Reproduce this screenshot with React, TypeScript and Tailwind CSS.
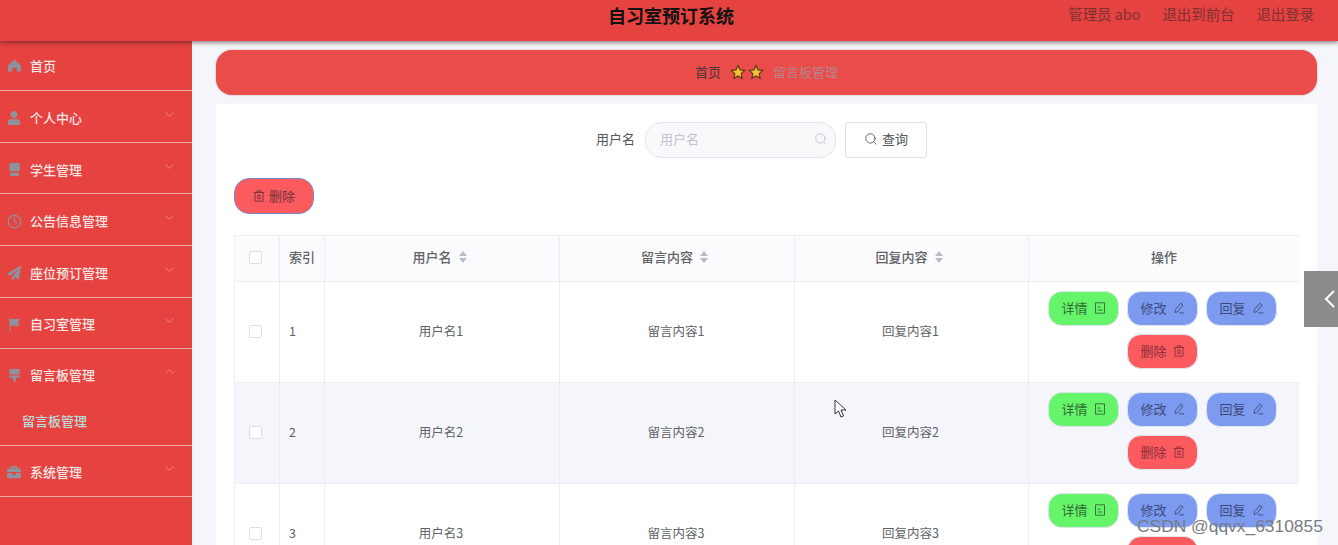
import React from 'react';
import { ChevronDown, ChevronUp, Clock, Search } from 'lucide-react';
import { FaBriefcase, FaPaperPlane, FaUser } from 'react-icons/fa';

const font = 'font-["Noto_Sans_CJK_SC","Liberation_Sans",sans-serif]';

const HomeIcon = () => (
  <svg viewBox="0 0 16 16" className="h-[15px] w-[15px] fill-[#8d939c]">
    <path d="M8 1.5 1 8v6.5h4.6v-4h4.8v4H15V8z" />
  </svg>
);
const ShopIcon = () => (
  <svg viewBox="0 0 16 16" className="h-[15px] w-[15px] fill-[#8d939c]">
    <path d="M2.5 1h11v8.5q-1.4 1.2-2.8 0-1.4 1.2-2.7 0-1.3 1.2-2.7 0-1.4 1.2-2.8 0zM3.5 11.5h9V15h-9z" />
  </svg>
);
const FlagIcon = () => (
  <svg viewBox="0 0 16 16" className="h-[15px] w-[15px] fill-[#8d939c]">
    <path d="M2.5 1h1.2v14H2.5zM3.7 2H14l-2.6 3.6L14 9.2H3.7z" />
  </svg>
);
const BrushIcon = () => (
  <svg viewBox="0 0 16 16" className="h-[15px] w-[15px] fill-[#8d939c]">
    <path d="M2.5 1h11v6h-11zM2.5 8h11v2.5H9.5V13L8 15.5 6.5 13v-2.5h-4z" />
  </svg>
);

// element-ui style outline icons for the table buttons
const DocIcon = () => (
  <svg viewBox="0 0 12 12" className="h-[12px] w-[12px] fill-none stroke-current stroke-[0.9]">
    <path d="M1.5.8h9v10.4h-9zM3.5 5h3M3.5 8h5" />
  </svg>
);
const PenIcon = () => (
  <svg viewBox="0 0 12 12" className="h-[12px] w-[12px] fill-none stroke-current stroke-[0.9]">
    <path d="M7.8 1.2 10 3 4.8 9.6l-2.6.9.1-2.8zM6.3 10.9h5" />
  </svg>
);
const BinIcon = () => (
  <svg viewBox="0 0 12 12" className="h-[12px] w-[12px] fill-none stroke-current stroke-[0.9]">
    <path d="M.8 2.5h10.4M4 2.5V.9h4v1.6M2 2.5v8.7h8V2.5M4.8 5v3.6h2.4V5z" />
  </svg>
);

const menu = [
  { label: '首页', icon: <HomeIcon />, h: 'h-[49px]', arrow: false, pt: '' },
  { label: '个人中心', icon: <FaUser className="h-[14px] w-[14px] text-[#8d939c]" />, h: 'h-[51px]', arrow: true, pt: 'pt-[3px]' },
  { label: '学生管理', icon: <ShopIcon />, h: 'h-[50px]', arrow: true, pt: 'pt-[3px]' },
  { label: '公告信息管理', icon: <Clock className="h-[15px] w-[15px] text-[#8d939c]" />, h: 'h-[51px]', arrow: true, pt: 'pt-[3px]' },
  { label: '座位预订管理', icon: <FaPaperPlane className="h-[14px] w-[14px] text-[#8d939c]" />, h: 'h-[51px]', arrow: true, pt: 'pt-[3px]' },
  { label: '自习室管理', icon: <FlagIcon />, h: 'h-[50px]', arrow: true, pt: 'pt-[2px]' },
];

const Star = () => (
  <svg viewBox="0 0 20 20" className="h-[16px] w-[16px] fill-[#f7c22f] stroke-[#5b3a1a] stroke-[1.5]">
    <path d="m10 2 2.5 5.3 5.7.7-4.2 4 1.1 5.8L10 15l-5.1 2.8L6 12 1.8 8l5.7-.7z" />
  </svg>
);

const MenuRow: React.FC<{ label: string; icon: React.ReactNode; h: string; arrow: boolean; pt: string; open?: boolean }> = ({ label, icon, h, arrow, pt, open }) => (
  <div className={`flex items-center pl-[7px] pr-[15px] ${h} ${pt}`}>
    <span className="flex w-[23px] shrink-0 items-center">{icon}</span>
    <span className="text-[13px] font-medium text-[#f6e7e7]">{label}</span>
    {arrow && (
      <span className="ml-auto -mt-[7px] text-[#ee8a88]">
        {open ? <ChevronUp size={15} strokeWidth={1.5} /> : <ChevronDown size={15} strokeWidth={1.5} />}
      </span>
    )}
  </div>
);

const Sidebar = () => (
  <aside className="w-[192px] shrink-0 bg-[#e64240]">
    {menu.map((m) => (
      <div key={m.label} className="border-b border-[#eda9a7]">
        <MenuRow {...m} />
      </div>
    ))}
    <div className="border-b border-[#eda9a7]">
      <MenuRow label="留言板管理" icon={<BrushIcon />} h="h-[51px]" pt="pt-[1px]" arrow open />
      <div className="flex h-[45px] items-center pb-[3px] pl-[22px] text-[13px] font-medium text-[#b9dfdc]">留言板管理</div>
    </div>
    <div className="border-b border-[#eda9a7]">
      <MenuRow label="系统管理" icon={<FaBriefcase className="h-[14px] w-[14px] text-[#8d939c]" />} h="h-[50px]" pt="pt-[2px]" arrow />
    </div>
  </aside>
);

const Checkbox = () => <span className="block h-[13px] w-[13px] rounded-[2px] border border-[#dcdfe6] bg-white" />;

const Sort = () => (
  <span className="ml-[7px] flex flex-col gap-[2px]">
    <span className="h-0 w-0 border-x-[4.5px] border-b-[5px] border-x-transparent border-b-[#b8bcc4]" />
    <span className="h-0 w-0 border-x-[4.5px] border-t-[5px] border-x-transparent border-t-[#b8bcc4]" />
  </span>
);

const ActionBtn: React.FC<{ label: string; color: string; icon: React.ReactNode }> = ({ label, color, icon }) => (
  <button className={`flex h-[35px] w-[71px] items-center justify-center gap-[6px] rounded-[14px] border border-[#dfe3ea] pb-[2px] text-[13px] ${color}`}>
    {label}
    {icon}
  </button>
);

const headCell = 'flex h-[46px] items-center justify-center border-r border-b border-[#ebeef5] bg-[#fbfbfd] pb-[3px] text-[13px] font-medium text-[#606266]';
const bodyCell = 'flex items-center justify-center border-r border-b border-[#ebeef5] pb-[1px] text-[12.5px] text-[#606266]';

const Row: React.FC<{ n: number; alt: boolean }> = ({ n, alt }) => {
  const bg = alt ? 'bg-[#f5f6fb]' : 'bg-white';
  return (
    <div className="flex h-[101px] shrink-0">
      <div className={`${bodyCell} ${bg} w-[46px] border-l pr-[3px]`}><Checkbox /></div>
      <div className={`${bodyCell} ${bg} w-[45px] justify-start pl-[9px]`}>{n}</div>
      <div className={`${bodyCell} ${bg} w-[235px] pr-[2px]`}>用户名{n}</div>
      <div className={`${bodyCell} ${bg} w-[235px] pr-[2px]`}>留言内容{n}</div>
      <div className={`${bodyCell} ${bg} w-[234px] pr-[2px]`}>回复内容{n}</div>
      <div className={`border-b border-[#ebeef5] ${bg} flex w-[270px] flex-wrap content-start justify-center gap-x-[8px] gap-y-[8px] pt-[9px] pr-[3px]`}>
        <ActionBtn label="详情" color="bg-[#66f56a] text-[#2f6b35]" icon={<DocIcon />} />
        <ActionBtn label="修改" color="bg-[#7b9af0] text-[#3c4a78]" icon={<PenIcon />} />
        <ActionBtn label="回复" color="bg-[#7b9af0] text-[#3c4a78]" icon={<PenIcon />} />
        <ActionBtn label="删除" color="bg-[#fb5a5f] text-[#8c2f3a]" icon={<BinIcon />} />
      </div>
    </div>
  );
};

export default function App() {
  return (
    <div className={`relative flex h-[545px] w-[1338px] flex-col overflow-hidden bg-[#f5f6fb] ${font}`}>
      <header className="relative z-10 flex h-[41px] shrink-0 items-start bg-[#e64240] shadow-[0_2px_4px_rgba(60,30,30,0.5)]">
        <div className="flex-1 pt-[2px] pl-[608px] text-[18px] leading-[26px] font-bold text-[#111]">自习室预订系统</div>
        <div className="flex gap-[22px] pt-[4px] pr-[24px] text-[14.4px] leading-[20px] text-[#7d3033]">
          <span>管理员 abo</span>
          <span>退出到前台</span>
          <span>退出登录</span>
        </div>
      </header>

      <div className="flex min-h-0 flex-1">
        <Sidebar />
        <main className="min-w-0 flex-1 pt-[9px] pr-[21px] pl-[24px]">
          <div className="flex h-[45px] items-center justify-center gap-[9px] rounded-[16px] bg-[#ea4c4a] pb-[2px] text-[13px] shadow-[0_0_2px_rgba(120,60,60,0.5)]">
            <span className="text-[#4a3538]">首页</span>
            <span className="flex gap-[2px]"><Star /><Star /></span>
            <span className="text-[#b9848c]">留言板管理</span>
          </div>

          <section className="mt-[9px] h-[500px] bg-white pt-[18px] pl-[18px] pr-[18px]">
            <div className="flex h-[36px] items-center justify-center pr-[10px]">
              <span className="mr-[10px] pb-[2px] text-[13px] text-[#55565b]">用户名</span>
              <div className="flex h-[36px] w-[191px] items-center justify-between rounded-[16px] border border-[#e4e6ee] bg-[#f9f9fc] pr-[7px] pb-[2px] pl-[14px] text-[13px] text-[#c0c4cc]">
                用户名
                <Search size={14} strokeWidth={1.5} className="text-[#c0c4cc]" />
              </div>
              <button className="ml-[9px] flex h-[36px] w-[82px] items-center justify-center gap-[4px] rounded-[3px] border border-[#dcdfe6] bg-white pb-[2px] text-[13px] text-[#55565b]">
                <Search size={14} strokeWidth={1.5} />
                查询
              </button>
            </div>

            <button className="mt-[20px] flex h-[36px] w-[80px] items-center justify-center gap-[4px] rounded-[15px] border border-[#7b8cc4] bg-[#fb5a5f] text-[13px] text-[#71343c]">
              <BinIcon />
              删除
            </button>

            <div className="mt-[21px] flex flex-col">
              <div className="flex h-[47px] shrink-0 border-t border-[#ebeef5]">
                <div className={`${headCell} w-[46px] border-l pr-[3px]`}><Checkbox /></div>
                <div className={`${headCell} w-[45px]`}>索引</div>
                <div className={`${headCell} w-[235px] pr-[5px]`}>用户名<Sort /></div>
                <div className={`${headCell} w-[235px] pr-[5px]`}>留言内容<Sort /></div>
                <div className={`${headCell} w-[234px] pr-[5px]`}>回复内容<Sort /></div>
                <div className={`${headCell} w-[270px] border-r-0`}>操作</div>
              </div>
              <Row n={1} alt={false} />
              <Row n={2} alt />
              <Row n={3} alt={false} />
            </div>
          </section>
        </main>
      </div>

      {/* floating tab on the right edge */}
      <div className="absolute top-[271px] right-0 z-20 flex h-[56px] w-[34px] items-center justify-end bg-[#8b8b8b] pr-[3px]">
        <svg viewBox="0 0 11 18" className="h-[18px] w-[11px] fill-none stroke-white stroke-2">
          <path d="M10 1 2 9l8 8" />
        </svg>
      </div>

      {/* mouse cursor from the recording */}
      <svg viewBox="0 0 14 20" className="absolute top-[399px] left-[834px] z-20 h-[20px] w-[14px] fill-white stroke-[#333]">
        <path d="M1 1v14l3.5-3 2.5 6 2.5-1-2.5-6h5z" />
      </svg>

      <div className="absolute top-[516px] left-[1137px] z-20 font-['Liberation_Sans',sans-serif] text-[17.4px] leading-[20px] text-[#777b84]">
        CSDN @qqvx_6310855
      </div>
    </div>
  );
}
